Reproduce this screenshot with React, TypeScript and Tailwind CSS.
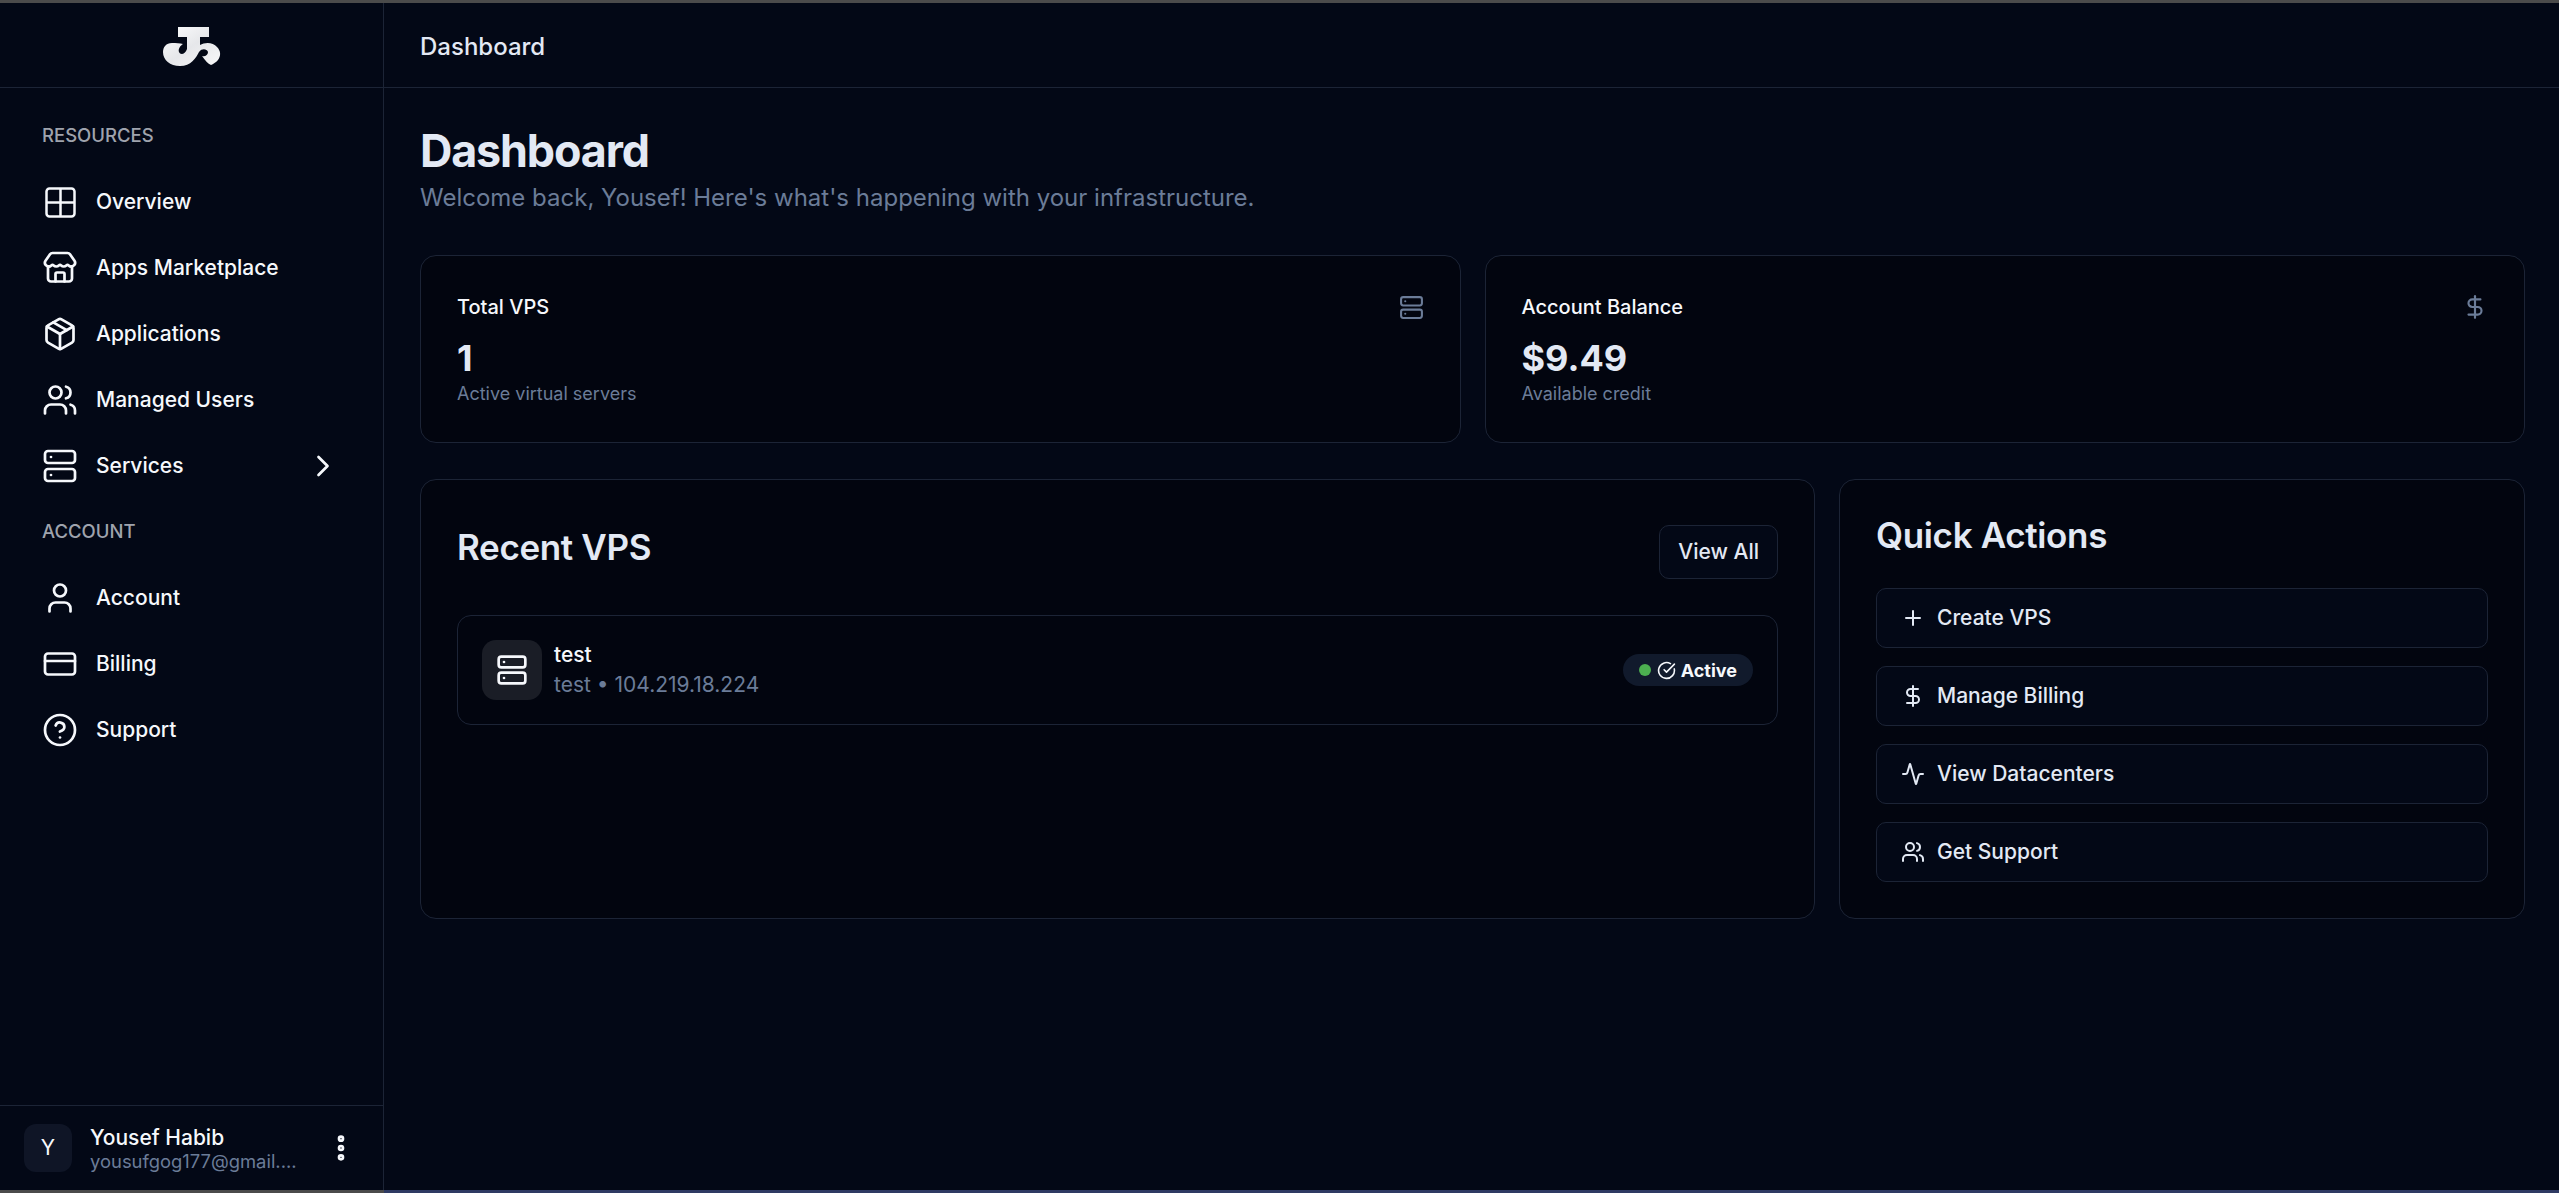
import {
  Activity,
  ChevronRight,
  CircleCheckBig,
  CircleHelp,
  CreditCard,
  DollarSign,
  EllipsisVertical,
  Package,
  Plus,
  Server,
  Store,
  User,
  Users,
} from 'lucide-react';
import type { ReactNode } from 'react';

const Logo = () => (
  <svg width="58" height="40" viewBox="0 0 58 40">
    <defs>
      <linearGradient id="logo" x1="0" y1="0" x2="1" y2="1">
        <stop offset="0" stopColor="#ffffff" />
        <stop offset="0.5" stopColor="#e6e7ea" />
        <stop offset="1" stopColor="#f8f8f9" />
      </linearGradient>
    </defs>
    <path
      fill="url(#logo)"
      d="M15 0H46V10H37V18C42 15 50 15 54 20C58 24 58 29 55 33C53 35.500 50 37 48 38C45 37 42 33 39 29C42 30 45 28 45 25C44 22 39 21 36 25C33 31 28 39 17 39C7 39 0 33 0 25C0 20 3 16 9 16C13 16 17 16 20 17C17 19 15 22 16 25C17 28 22 28 24 22V10H15Z"
    />
  </svg>
);

const GridIcon = () => (
  <svg width="33" height="33" viewBox="0 0 33 33" fill="none" stroke="currentColor" strokeWidth="2.500" className="text-[#f6f8fc]">
    <rect x="2.500" y="2.500" width="28" height="28" rx="3" />
    <path d="M16.500 2.500v28M2.500 16.500h28" />
  </svg>
);

const NavItem = ({ icon, label, trailing }: { icon: ReactNode; label: string; trailing?: ReactNode }) => (
  <div className="flex h-[66px] items-center pl-[42px] pr-[42px]">
    <div className="flex w-[36px] justify-center">{icon}</div>
    <span className="ml-[18px] flex-1 text-[21px] font-medium text-[#f6f8fc]">{label}</span>
    {trailing}
  </div>
);

const SectionLabel = ({ children }: { children: string }) => (
  <div className="flex h-[66px] items-center pl-[42px] text-[18.500px] font-medium text-[#9fa3ad]">{children}</div>
);

const StatCard = ({ title, value, note, icon }: { title: string; value: string; note: string; icon: ReactNode }) => (
  <div className="h-[188px] flex-1 rounded-[16px] border border-[#1c2436] bg-[#02050f] px-[36px] pt-[36px]">
    <div className="flex h-[30px] items-center justify-between">
      <span className="text-[20px] font-medium text-[#f6f8fc]">{title}</span>
      {icon}
    </div>
    <div className="mt-[13px] text-[36px] leading-[46px] font-bold text-[#e3e9f4]">{value}</div>
    <div className="text-[18px] leading-[26px] text-[#6b7c98]">{note}</div>
  </div>
);

const QuickAction = ({ icon, label }: { icon: ReactNode; label: string }) => (
  <div className="flex h-[60px] items-center rounded-[10px] border border-[#1c2436] bg-[#030816] pl-[22px]">
    <div className="flex w-[28px] justify-center text-[#e3e9f4]">{icon}</div>
    <span className="ml-[10px] text-[21px] font-medium text-[#e3e9f4]">{label}</span>
  </div>
);

const App = () => {
  return (
    <div className="flex h-[1193px] w-full flex-col overflow-hidden bg-[#030816] font-['Inter',sans-serif]">
      <div className="h-[3px] shrink-0 bg-[#4b4b4b]" />
      <div className="flex min-h-0 flex-1">
        {/* Sidebar */}
        <aside className="flex w-[384px] shrink-0 flex-col border-r border-[#1c2436]">
          <div className="flex h-[85px] shrink-0 items-center justify-center border-b border-[#1c2436] pt-[3px]">
            <Logo />
          </div>
          <nav className="flex-1 pt-[15px]">
            <SectionLabel>RESOURCES</SectionLabel>
            <NavItem icon={<GridIcon />} label="Overview" />
            <NavItem icon={<Store size={36} strokeWidth={1.800} className="text-[#f6f8fc]" />} label="Apps Marketplace" />
            <NavItem icon={<Package size={36} strokeWidth={1.800} className="text-[#f6f8fc]" />} label="Applications" />
            <NavItem icon={<Users size={36} strokeWidth={1.800} className="text-[#f6f8fc]" />} label="Managed Users" />
            <NavItem
              icon={<Server size={36} strokeWidth={1.800} className="text-[#f6f8fc]" />}
              label="Services"
              trailing={<ChevronRight size={36} strokeWidth={1.800} className="text-[#f6f8fc]" />}
            />
            <SectionLabel>ACCOUNT</SectionLabel>
            <NavItem icon={<User size={36} strokeWidth={1.800} className="text-[#f6f8fc]" />} label="Account" />
            <NavItem icon={<CreditCard size={36} strokeWidth={1.800} className="text-[#f6f8fc]" />} label="Billing" />
            <NavItem icon={<CircleHelp size={36} strokeWidth={1.800} className="text-[#f6f8fc]" />} label="Support" />
          </nav>
          <div className="flex h-[85px] shrink-0 items-center border-t border-[#1c2436] pl-[24px] pr-[26px]">
            <div className="flex h-[48px] w-[48px] items-center justify-center rounded-[12px] bg-[#0f1526] text-[21px] text-[#f6f8fc]">
              Y
            </div>
            <div className="ml-[18px] min-w-0 flex-1">
              <div className="text-[21px] leading-[26px] font-medium text-[#f6f8fc]">Yousef Habib</div>
              <div className="text-[18.400px] leading-[21px] text-[#6b7c98]">yousufgog177@gmail....</div>
            </div>
            <EllipsisVertical size={32} strokeWidth={3} className="text-[#f6f8fc]" />
          </div>
        </aside>

        {/* Main */}
        <div className="flex min-w-0 flex-1 flex-col">
          <header className="flex h-[85px] shrink-0 items-center border-b border-[#1c2436] pl-[36px] pt-[3px]">
            <span className="text-[24px] font-medium text-[#e3e9f4]">Dashboard</span>
          </header>
          <main className="flex-1 pl-[36px] pr-[34px] pt-[38px]">
            <h1 className="text-[44.800px] leading-[50px] font-bold tracking-[-0.025em] text-[#e3e9f4]">Dashboard</h1>
            <p className="mt-[4px] text-[24px] leading-[36px] text-[#6b7c98]">
              Welcome back, Yousef! Here's what's happening with your infrastructure.
            </p>

            <div className="mt-[39px] flex gap-[24px]">
              <StatCard
                title="Total VPS"
                value="1"
                note="Active virtual servers"
                icon={<Server size={25} className="text-[#6b7c98]" />}
              />
              <StatCard
                title="Account Balance"
                value="$9.49"
                note="Available credit"
                icon={<DollarSign size={26} className="text-[#6b7c98]" />}
              />
            </div>

            <div className="mt-[36px] flex h-[440px] gap-[24px]">
              <section className="flex-1 rounded-[16px] border border-[#1c2436] bg-[#02050f] px-[36px] pt-[43px]">
                <div className="flex h-[56px] items-start justify-between">
                  <h2 className="text-[35px] leading-[48px] font-semibold tracking-[-0.01em] text-[#e3e9f4]">Recent VPS</h2>
                  <div className="mt-[2px] flex h-[54px] items-center rounded-[10px] border border-[#1c2436] bg-[#030816] px-[18px] text-[21px] font-medium text-[#e3e9f4]">
                    View All
                  </div>
                </div>
                <div className="mt-[36px] flex h-[110px] items-center rounded-[14px] border border-[#1c2436] px-[24px]">
                  <div className="flex h-[60px] w-[60px] items-center justify-center rounded-[14px] bg-[#1a1d26] text-[#f6f8fc]">
                    <Server size={32} />
                  </div>
                  <div className="ml-[12px] flex-1 pb-[1px]">
                    <div className="text-[21px] leading-[30px] font-medium text-[#f6f8fc]">test</div>
                    <div className="text-[21px] leading-[30px] text-[#6b7c98]">test • 104.219.18.224</div>
                  </div>
                  <div className="flex h-[32px] items-center rounded-full bg-[#111a2c] px-[16px]">
                    <span className="h-[12px] w-[12px] rounded-full bg-[#4caf50]" />
                    <CircleCheckBig size={19} className="ml-[6px] text-[#f6f8fc]" />
                    <span className="ml-[5px] text-[18px] font-bold text-[#f6f8fc]">Active</span>
                  </div>
                </div>
              </section>

              <section className="w-[686px] shrink-0 rounded-[16px] border border-[#1c2436] bg-[#02050f] px-[36px] pt-[34px]">
                <h2 className="text-[35px] leading-[42px] font-semibold tracking-[-0.01em] text-[#e3e9f4]">Quick Actions</h2>
                <div className="mt-[32px] flex flex-col gap-[18px]">
                  <QuickAction icon={<Plus size={24} />} label="Create VPS" />
                  <QuickAction icon={<DollarSign size={24} />} label="Manage Billing" />
                  <QuickAction icon={<Activity size={24} />} label="View Datacenters" />
                  <QuickAction icon={<Users size={24} />} label="Get Support" />
                </div>
              </section>
            </div>
          </main>
        </div>
      </div>
      <div className="flex h-[3px] shrink-0">
        <div className="w-[384px] bg-[#4b4b4b]" />
        <div className="flex-1 bg-[#2f3a63]" />
      </div>
    </div>
  );
};

export default App;
